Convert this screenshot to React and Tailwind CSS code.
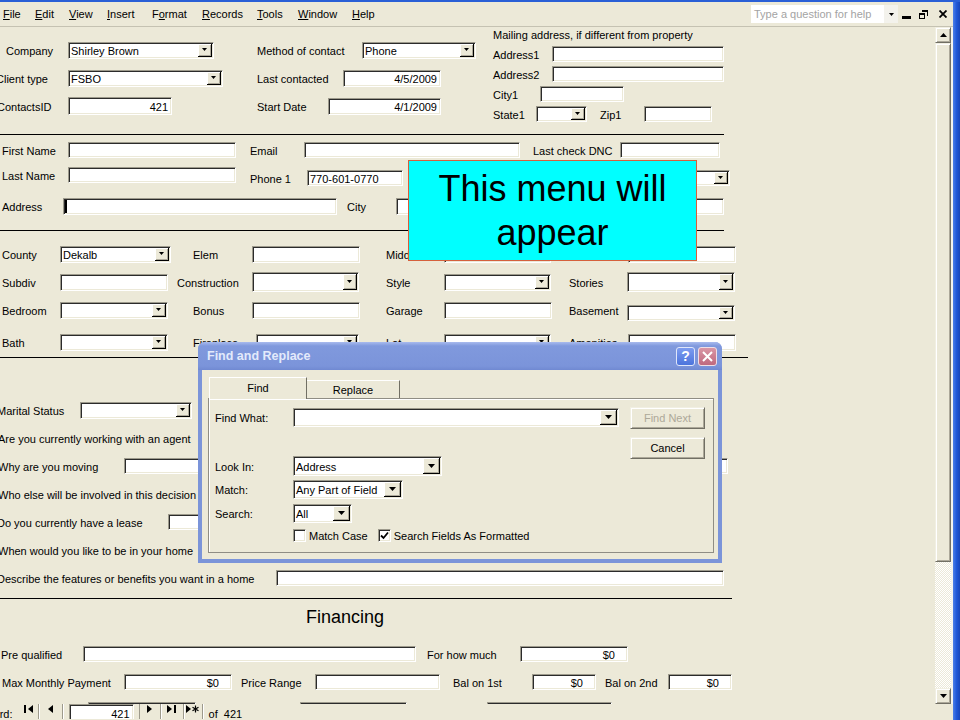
import React from 'react';

const FONT = "font-['Liberation_Sans',Arial,sans-serif]";
const ROW = 'flex items-center h-[28px] shrink-0';
const SUNK =
  'shrink-0 bg-white border border-t-[#9d9a8c] border-l-[#9d9a8c] border-r-white border-b-white shadow-[inset_1px_1px_0_#2b2b2b,inset_-1px_-1px_0_#ece9d8]';
const RAISED =
  'bg-[#ece9d8] border border-t-[#f1efe2] border-l-[#f1efe2] border-r-[#716f64] border-b-[#716f64] shadow-[inset_1px_1px_0_#fff,inset_-1px_-1px_0_#aca899]';

function L({ c = '', children }) {
  return <div className={`shrink-0 whitespace-nowrap text-[11px] leading-[13px] pt-[2px] ${c}`}>{children}</div>;
}

function Box({ c = '', v, right, money, caret }) {
  const pad = money ? 'justify-end pr-[12px]' : right ? 'justify-end pr-[3px]' : caret ? 'pl-[1px]' : 'pl-[2px]';
  return (
    <div className={`${SUNK} flex items-center overflow-hidden whitespace-nowrap text-[11px] leading-none pt-[2px] ${pad} ${c}`}>
      {caret && <span className="w-[2px] h-[13px] bg-black -mt-[2px]" />}
      {v}
    </div>
  );
}

function Tri({ big, up }) {
  const w = big ? 7 : 5;
  const h = big ? 4 : 3;
  const pts = up ? `0,${h} ${w},${h} ${w / 2},0` : `0,0 ${w},0 ${w / 2},${h}`;
  return (
    <svg width={w} height={h} viewBox={`0 0 ${w} ${h}`}>
      <polygon points={pts} fill="#000" />
    </svg>
  );
}

function Combo({ c = '', v, big, btn = 'w-[14px]' }) {
  return (
    <div className={`${SUNK} flex items-stretch overflow-hidden text-[11px] leading-none ${c}`}>
      <div className="flex-1 flex items-center pl-[2px] pt-[2px] whitespace-nowrap overflow-hidden">{v}</div>
      <div
        className={`shrink-0 ${btn} my-[1px] mr-[1px] bg-[#ece9d8] border-r border-b border-r-black border-b-black shadow-[inset_1px_1px_0_#fff,inset_-1px_-1px_0_#aca899] flex items-center justify-center`}
      >
        <Tri big={big} />
      </div>
    </div>
  );
}

function Line({ c }) {
  return <div className={`shrink-0 h-px bg-black ${c}`} />;
}

function MenuBar() {
  return (
    <div className="h-[25px] shrink-0 border-b border-[#c5c2b2] flex items-center text-[11px]">
      <span className="w-[35px] pl-[3px]"><u>F</u>ile</span>
      <span className="w-[34px]"><u>E</u>dit</span>
      <span className="w-[38px]"><u>V</u>iew</span>
      <span className="w-[45px]"><u>I</u>nsert</span>
      <span className="w-[50px]">F<u>o</u>rmat</span>
      <span className="w-[55px]"><u>R</u>ecords</span>
      <span className="w-[41px]"><u>T</u>ools</span>
      <span className="w-[54px]"><u>W</u>indow</span>
      <span><u>H</u>elp</span>

      {/* help box + window buttons */}
      <div className="ml-auto flex h-[18px] w-[147px]">
        <div className="flex-1 bg-white flex items-center pl-[3px] text-[#a3a3a3]">Type a question for help</div>
        <div className="w-[14px] bg-[#f3f2ec] flex items-center justify-center">
          <Tri />
        </div>
      </div>
      <svg className="ml-[4px] mt-[6px]" width="9" height="3" viewBox="0 0 9 3">
        <rect width="9" height="3" fill="#000" />
      </svg>
      <svg className="ml-[8px]" width="9" height="9" viewBox="0 0 9 9">
        <path d="M3 0h6v6H8V2H3z" fill="#000" />
        <rect x="0.5" y="3.5" width="5" height="5" fill="#ece9d8" stroke="#000" />
        <rect x="0" y="3" width="6" height="2" fill="#000" />
      </svg>
      <svg className="ml-[11px] mr-[6px]" width="8" height="8" viewBox="0 0 8 8">
        <path d="M0.5 0.5L7.5 7.5M7.5 0.5L0.5 7.5" stroke="#000" strokeWidth="1.8" />
      </svg>
    </div>
  );
}

function ScrollBar() {
  return (
    <div className="w-[16px] shrink-0 flex flex-col">
      <div className={`h-[16px] ${RAISED} flex items-center justify-center`}>
        <Tri big up />
      </div>
      <div className={`h-[519px] ${RAISED}`} />
      <div className="h-[126px] bg-[repeating-conic-gradient(#ffffff_0%_25%,#ece9d8_0%_50%)] bg-[length:2px_2px]" />
      <div className={`h-[16px] ${RAISED} flex items-center justify-center`}>
        <Tri big />
      </div>
    </div>
  );
}

function Form() {
  return (
    <div className="w-[935px] shrink-0 h-full overflow-hidden flex flex-col text-[11px]">
      {/* company block + mailing address */}
      <div className="h-[107px] shrink-0 flex">
        <div className="w-[493px] shrink-0 pt-[9px] flex flex-col">
          <div className={ROW}>
            <L c="w-[68px] pl-[6px]">Company</L>
            <Combo c="w-[146px] h-[17px]" v="Shirley Brown" />
            <L c="w-[148px] pl-[43px]">Method of contact</L>
            <Combo c="w-[114px] h-[17px]" v="Phone" />
          </div>
          <div className={ROW}>
            <L c="w-[72px] -ml-[4px]">Client type</L>
            <Combo c="w-[155px] h-[17px]" v="FSBO" />
            <L c="w-[120px] pl-[34px]">Last contacted</L>
            <Box c="w-[98px] h-[17px]" v="4/5/2009" right />
          </div>
          <div className={ROW}>
            <L c="w-[71px] -ml-[3px]">ContactsID</L>
            <Box c="w-[104px] h-[18px]" v="421" right />
            <L c="w-[156px] pl-[85px]">Start Date</L>
            <Box c="w-[113px] h-[17px]" v="4/1/2009" right />
          </div>
        </div>
        <div className="flex flex-col">
          <div className="h-[14px] flex items-center">
            <L>Mailing address, if different from property</L>
          </div>
          <div className="mt-[3px] h-[20px] flex items-center">
            <L c="w-[59px]">Address1</L>
            <Box c="w-[172px] h-[16px]" />
          </div>
          <div className="h-[20px] flex items-center">
            <L c="w-[59px]">Address2</L>
            <Box c="w-[172px] h-[16px]" />
          </div>
          <div className="h-[20px] flex items-center">
            <L c="w-[47px]">City1</L>
            <Box c="w-[84px] h-[16px]" />
          </div>
          <div className="h-[20px] flex items-center">
            <L c="w-[43px]">State1</L>
            <Combo c="w-[51px] h-[16px]" />
            <L c="w-[57px] pl-[13px]">Zip1</L>
            <Box c="w-[68px] h-[16px]" />
          </div>
        </div>
      </div>
      <Line c="w-[724px]" />

      {/* name / contact */}
      <div className="flex items-center h-[30px] shrink-0">
        <L c="w-[68px] pl-[2px]">First Name</L>
        <Box c="w-[168px] h-[16px]" />
        <L c="w-[68px] pl-[14px]">Email</L>
        <Box c="w-[216px] h-[16px]" />
        <L c="w-[100px] pl-[13px]">Last check DNC</L>
        <Box c="w-[100px] h-[16px]" />
      </div>
      <div className="flex items-center h-[20px] shrink-0">
        <L c="w-[68px] pl-[2px]">Last Name</L>
        <Box c="w-[168px] h-[16px]" />
        <L c="w-[71px] pl-[14px] mt-[6px]">Phone 1</L>
        <Box c="w-[96px] h-[16px] mt-[6px]" v="770-601-0770" />
        <div className="w-[217px] shrink-0" />
        <Combo c="w-[110px] h-[16px] mt-[6px]" />
      </div>
      <div className="flex items-center h-[42px] shrink-0">
        <L c="w-[63px] pl-[2px]">Address</L>
        <Box c="w-[274px] h-[17px]" caret />
        <L c="w-[59px] pl-[10px]">City</L>
        <Box c="w-[124px] h-[17px]" />
        <div className="w-[100px] shrink-0" />
        <Box c="w-[104px] h-[17px]" />
      </div>
      <Line c="w-[724px] mt-[3px]" />

      {/* property */}
      <div className="pt-[9px] flex flex-col">
        <div className={ROW}>
          <L c="w-[60px] pl-[2px]">County</L>
          <Combo c="w-[111px] h-[17px]" v="Dekalb" />
          <L c="w-[81px] pl-[22px]">Elem</L>
          <Box c="w-[108px] h-[17px]" />
          <L c="w-[84px] pl-[26px]">Middle</L>
          <Box c="w-[107px] h-[17px]" />
          <div className="w-[77px] shrink-0" />
          <Box c="w-[108px] h-[17px]" />
        </div>
        <div className={ROW}>
          <L c="w-[60px] pl-[2px]">Subdiv</L>
          <Box c="w-[108px] h-[17px]" />
          <L c="w-[84px] pl-[9px]">Construction</L>
          <Combo c="w-[107px] h-[20px]" />
          <L c="w-[85px] pl-[27px]">Style</L>
          <Combo c="w-[107px] h-[17px]" />
          <L c="w-[76px] pl-[18px]">Stories</L>
          <Combo c="w-[108px] h-[20px]" />
        </div>
        <div className={ROW}>
          <L c="w-[60px] pl-[2px]">Bedroom</L>
          <Combo c="w-[108px] h-[17px]" />
          <L c="w-[84px] pl-[25px]">Bonus</L>
          <Box c="w-[108px] h-[17px]" />
          <L c="w-[84px] pl-[26px]">Garage</L>
          <Box c="w-[108px] h-[17px]" />
          <L c="w-[75px] pl-[17px]">Basement</L>
          <Combo c="w-[108px] h-[16px] mt-[6px]" />
        </div>
        <div className={`${ROW} mt-[4px]`}>
          <L c="w-[60px] pl-[2px]">Bath</L>
          <Combo c="w-[108px] h-[17px]" />
          <L c="w-[88px] pl-[25px]">Fireplace</L>
          <Combo c="w-[103px] h-[17px]" />
          <L c="w-[85px] pl-[27px]">Lot</L>
          <Combo c="w-[107px] h-[17px]" />
          <L c="w-[77px] pl-[18px]">Amenities</L>
          <Box c="w-[108px] h-[17px]" />
        </div>
      </div>
      <Line c="w-[748px] mt-[1px]" />

      {/* questions */}
      <div className="pt-[38px] flex flex-col">
        <div className={ROW}>
          <L c="w-[83px] -ml-[3px]">Marital Status</L>
          <Combo c="w-[112px] h-[17px]" />
        </div>
        <div className={ROW}>
          <L c="-ml-[2px]">Are you currently working with an agent</L>
        </div>
        <div className={ROW}>
          <L c="w-[126px] -ml-[2px]">Why are you moving</L>
          <Box c="w-[604px] h-[16px]" />
        </div>
        <div className={ROW}>
          <L c="-ml-[2px]">Who else will be involved in this decision</L>
        </div>
        <div className={ROW}>
          <L c="w-[171px] -ml-[3px]">Do you currently have a lease</L>
          <Box c="w-[250px] h-[16px]" />
        </div>
        <div className={ROW}>
          <L c="-ml-[2px]">When would you like to be in your home</L>
        </div>
        <div className={ROW}>
          <L c="w-[279px] -ml-[3px]">Describe the features or benefits you want in a home</L>
          <Box c="w-[448px] h-[16px]" />
        </div>
      </div>
      <Line c="w-[732px] mt-[6px]" />

      {/* financing */}
      <div className={`${ROW} mt-[3px]`}>
        <div className="pl-[306px] pt-[2px] text-[18px] leading-[22px] whitespace-nowrap">Financing</div>
      </div>
      <div className={`${ROW} mt-[10px]`}>
        <L c="w-[83px] pl-[1px]">Pre qualified</L>
        <Box c="w-[333px] h-[16px]" />
        <L c="w-[104px] pl-[11px]">For how much</L>
        <Box c="w-[108px] h-[16px]" v="$0" money />
      </div>
      <div className={ROW}>
        <L c="w-[124px] pl-[2px]">Max Monthly Payment</L>
        <Box c="w-[108px] h-[16px]" v="$0" money />
        <L c="w-[83px] pl-[9px]">Price Range</L>
        <Box c="w-[125px] h-[16px]" />
        <L c="w-[92px] pl-[13px]">Bal on 1st</L>
        <Box c="w-[64px] h-[16px]" v="$0" money />
        <L c="w-[72px] pl-[9px]">Bal on 2nd</L>
        <Box c="w-[64px] h-[16px]" v="$0" money />
      </div>
      <div className="flex items-start h-[17px] shrink-0 mt-[6px]">
        <Box c="ml-[88px] w-[108px] h-[17px]" />
        <Box c="ml-[104px] w-[107px] h-[17px]" />
        <Box c="ml-[80px] w-[125px] h-[17px]" />
      </div>
    </div>
  );
}

function NavGlyph({ kind }) {
  if (kind === 'first')
    return (
      <svg width="10" height="8" viewBox="0 0 10 8">
        <rect x="0" y="0" width="2" height="8" fill="#000" />
        <polygon points="9,0 9,8 4,4" fill="#000" />
      </svg>
    );
  if (kind === 'prev')
    return (
      <svg width="5" height="8" viewBox="0 0 5 8">
        <polygon points="5,0 5,8 0,4" fill="#000" />
      </svg>
    );
  if (kind === 'next')
    return (
      <svg width="5" height="8" viewBox="0 0 5 8">
        <polygon points="0,0 0,8 5,4" fill="#000" />
      </svg>
    );
  if (kind === 'last')
    return (
      <svg width="10" height="8" viewBox="0 0 10 8">
        <polygon points="0,0 0,8 5,4" fill="#000" />
        <rect x="7" y="0" width="2" height="8" fill="#000" />
      </svg>
    );
  return (
    <svg width="13" height="8" viewBox="0 0 13 8">
      <polygon points="0,0 0,8 5,4" fill="#000" />
      <path d="M9.5 0.5V7.5M6.5 2.3L12.5 5.7M12.5 2.3L6.5 5.7" stroke="#000" strokeWidth="1.2" />
    </svg>
  );
}

function RecordBar() {
  const btn = 'shrink-0 h-[15px] flex items-start justify-center pt-[1px] border-r border-r-[#9d9a8c] shadow-[1px_0_0_#fff]';
  return (
    <div className="h-[15px] shrink-0 flex items-start overflow-hidden text-[11px]">
      <L c="-ml-[26px] mt-[2px]">Record:</L>
      <div className={`${btn} w-[18px] ml-[8px]`}>
        <NavGlyph kind="first" />
      </div>
      <div className={`${btn} w-[24px]`}>
        <NavGlyph kind="prev" />
      </div>
      <Box c="ml-[6px] w-[65px] h-[19px]" v="421" right />
      <div className={`${btn} w-[22px] ml-[5px] border-l border-l-[#9d9a8c]`}>
        <NavGlyph kind="next" />
      </div>
      <div className={`${btn} w-[23px]`}>
        <NavGlyph kind="last" />
      </div>
      <div className={`${btn} w-[19px]`}>
        <NavGlyph kind="new" />
      </div>
      <L c="ml-[6px] mt-[2px]">of&nbsp;&nbsp;421</L>
    </div>
  );
}

function Callout() {
  return (
    <div className="absolute left-[408px] top-[160px] w-[289px] h-[101px] bg-[#00ffff] border border-[#d5603c] flex flex-col items-center justify-center text-[36px] leading-[44px] text-black">
      <span>This menu will</span>
      <span>appear</span>
    </div>
  );
}

function Checkbox({ on }) {
  return (
    <div className={`${SUNK} w-[13px] h-[13px] flex items-center justify-center`}>
      {on && (
        <svg width="9" height="9" viewBox="0 0 9 9">
          <path d="M1 4.5L3.5 7L8 1.5" stroke="#000" strokeWidth="1.8" fill="none" />
        </svg>
      )}
    </div>
  );
}

function Dialog() {
  const btn = `w-[75px] h-[22px] ${RAISED} flex items-center justify-center pt-[1px]`;
  return (
    <div className="absolute left-[198px] top-[342px] w-[524px] h-[221px] rounded-t-[7px] bg-[#7b94d9] flex flex-col text-[11px]">
      <div className="h-[28px] shrink-0 rounded-t-[7px] bg-[linear-gradient(180deg,#a9bbee_0%,#8099dd_14%,#7b94da_86%,#7089d2_100%)] flex items-center pl-[9px] pr-[5px]">
        <span className="font-bold text-[12.5px] text-[#e3eafb] pt-[1px]">Find and Replace</span>
        <div className="ml-auto flex gap-[3px]">
          <div className="w-[19px] h-[19px] rounded-[3px] border border-[#dfe6fa] bg-[linear-gradient(180deg,#7d9cf0,#4c74dc)] flex items-center justify-center text-white font-bold text-[14px] leading-none">
            ?
          </div>
          <div className="w-[19px] h-[19px] rounded-[3px] border border-[#efdfe6] bg-[linear-gradient(180deg,#d996a5,#c0697f)] flex items-center justify-center">
            <svg width="11" height="11" viewBox="0 0 11 11">
              <path d="M1 1L10 10M10 1L1 10" stroke="#fff" strokeWidth="2" />
            </svg>
          </div>
        </div>
      </div>
      <div className="flex-1 mx-[4px] mb-[4px] bg-[#ece9d8] pt-[7px] pl-[6px] pr-[4px] pb-[6px] flex flex-col">
        <div className="flex items-end h-[21px] shrink-0 pl-[1px]">
          <div className="relative z-10 w-[98px] h-[22px] -mb-[1px] bg-[#ece9d8] border-t border-l border-white border-r border-r-[#716f64] flex items-center justify-center pb-[1px]">
            Find
          </div>
          <div className="w-[93px] h-[18px] border-t border-t-white border-r border-r-[#716f64] flex items-center justify-center pt-[1px]">
            Replace
          </div>
        </div>
        <div className="flex-1 flex border border-[#8f8d84] shadow-[inset_1px_1px_0_#fff]">
          <div className="flex flex-col pt-[9px] pl-[6px]">
            <div className="flex items-center h-[19px]">
              <L c="w-[78px]">Find What:</L>
              <Combo c="w-[326px] h-[19px]" big btn="w-[17px]" />
            </div>
            <div className="flex items-center h-[20px] mt-[29px]">
              <L c="w-[78px]">Look In:</L>
              <Combo c="w-[149px] h-[20px]" v="Address" big btn="w-[17px]" />
            </div>
            <div className="flex items-center h-[19px] mt-[4px]">
              <L c="w-[78px]">Match:</L>
              <Combo c="w-[110px] h-[19px]" v="Any Part of Field" big btn="w-[17px]" />
            </div>
            <div className="flex items-center h-[19px] mt-[5px]">
              <L c="w-[78px]">Search:</L>
              <Combo c="w-[59px] h-[19px]" v="All" big btn="w-[17px]" />
            </div>
            <div className="flex items-center h-[13px] mt-[6px] pl-[78px]">
              <Checkbox />
              <L c="ml-[3px]">Match Case</L>
              <div className="ml-[10px]">
                <Checkbox on />
              </div>
              <L c="ml-[3px]">Search Fields As Formatted</L>
            </div>
          </div>
          <div className="flex flex-col pt-[8px] ml-[11px] gap-[8px]">
            <div className={`${btn} text-[#aca899]`}>Find Next</div>
            <div className={btn}>Cancel</div>
          </div>
        </div>
      </div>
    </div>
  );
}

export default function App() {
  return (
    <div className={`w-[960px] h-[720px] relative overflow-hidden bg-[#ece9d8] text-black ${FONT} flex flex-col`}>
      <div className="h-[2px] shrink-0 bg-[#2a5fd6]" />
      <div className="flex flex-1 min-h-0">
        <div className="w-[953px] shrink-0 flex flex-col">
          <MenuBar />
          <div className="flex h-[677px] shrink-0">
            <Form />
            <ScrollBar />
            <div className="w-[2px] bg-[#f4f3ee]" />
          </div>
          <RecordBar />
        </div>
        <div className="flex-1 bg-[linear-gradient(90deg,#4b7fe8,#2058d8,#1846b8)]" />
      </div>
      <Callout />
      <Dialog />
    </div>
  );
}
